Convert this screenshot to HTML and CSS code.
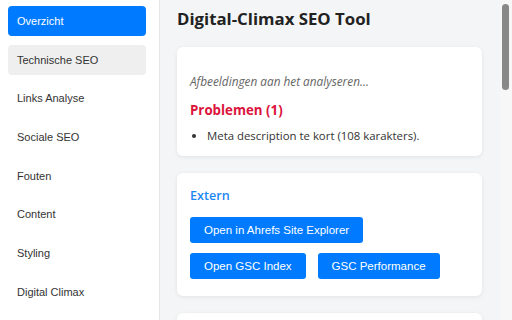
FILE: index.html
```html
<!DOCTYPE html>
<html lang="nl">

<head>
    <meta charset="UTF-8">
    <title>Digital-Climax SEO Tool</title>
    <link rel="stylesheet" href="styles.css">
</head>

<body>
    <!-- zijbalk met tabs -->
    <nav class="sidebar">
        <button class="tab active">Overzicht</button>
        <button class="tab hover">Technische SEO</button>
        <button class="tab">Links Analyse</button>
        <button class="tab">Sociale SEO</button>
        <button class="tab">Fouten</button>
        <button class="tab">Content</button>
        <button class="tab">Styling</button>
        <button class="tab">Digital Climax</button>
    </nav>

    <!-- hoofdinhoud -->
    <main class="main">
        <h1 class="title">Digital-Climax SEO Tool</h1>

        <section class="card">
            <div class="img-results"></div>
            <p class="status">Afbeeldingen aan het analyseren...</p>
            <h3 class="issues-title">Problemen (1)</h3>
            <ul class="issues">
                <li>Meta description te kort (108 karakters).</li>
            </ul>
        </section>

        <section class="card extern">
            <h3 class="section-title">Extern</h3>
            <div class="button-row">
                <button class="ext-button">Open in Ahrefs Site Explorer</button>
                <button class="ext-button">Open GSC Index</button>
                <button class="ext-button">GSC Performance</button>
            </div>
        </section>

        <!-- volgende kaart, valt onder de rand -->
        <section class="card next"></section>
    </main>

    <!-- schuifbalk van het hoofdgedeelte -->
    <div class="scrollbar">
        <div class="scroll-thumb"></div>
    </div>
</body>

</html>
```

FILE: styles.css
```css
/* basis */
* {
    box-sizing: border-box;
    margin: 0;
    padding: 0;
}

body {
    font-family: 'Open Sans', 'Noto Sans', sans-serif;
    background-color: #f4f5f7;
    color: #333;
    display: flex;
    height: 100vh;
    overflow: hidden;
}

/* zijbalk */
.sidebar {
    width: 160px;
    flex-shrink: 0;
    background-color: #fff;
    border-right: 1px solid #e6e6e6;
    padding: 6px 0 0 8px;
    display: flex;
    flex-direction: column;
    gap: 8.7px;
}

.tab {
    width: 138px;
    height: 30px;
    padding: 0 9px;
    text-align: left;
    font-family: 'Liberation Sans', Arial, sans-serif;
    font-size: 11px;
    color: #333;
    background: none;
    border: none;
    border-radius: 4px;
    cursor: pointer;
}

.tab.active {
    background-color: #007bff;
    color: #fff;
}

.tab.hover {
    background-color: #efefef;
}

/* hoofdgedeelte */
.main {
    flex: 1;
    overflow: hidden;
    padding: 8px 18px 0 17px;
}

.title {
    font-size: 16.8px;
    line-height: 22px;
    font-weight: 700;
    color: #222;
    margin-bottom: 17px;
}

.card {
    background-color: #fff;
    border-radius: 6px;
    box-shadow: 0 1px 4px rgba(0, 0, 0, 0.08);
    padding: 13px 13px 11px;
    margin-bottom: 17px;
}

.img-results {
    height: 13px;
}

.status {
    font-size: 11.8px;
    line-height: 16px;
    font-style: italic;
    color: #666;
    margin-bottom: 12px;
}

.issues-title {
    font-size: 13.3px;
    line-height: 19px;
    font-weight: 700;
    color: #dc143c;
    margin-bottom: 7px;
}

.issues {
    padding-left: 17px;
    font-size: 11.4px;
    line-height: 18px;
    color: #333;
}

.section-title {
    font-size: 12.6px;
    line-height: 19px;
    font-weight: 600;
    color: #1c87f2;
    margin-bottom: 12px;
}

/* externe knoppen */
.extern {
    padding-bottom: 17px;
}

.button-row {
    display: flex;
    flex-wrap: wrap;
    gap: 10px 12px;
}

.ext-button {
    height: 26px;
    padding: 0 14px;
    font-family: 'Liberation Sans', Arial, sans-serif;
    font-size: 11.5px;
    color: #fff;
    background-color: #007bff;
    border: none;
    border-radius: 3px;
    cursor: pointer;
}

.next {
    height: 120px;
}

/* schuifbalk */
.scrollbar {
    width: 12px;
    flex-shrink: 0;
    background-color: #f7f7f7;
    padding: 4px 3px 0 2px;
}

.scroll-thumb {
    height: 86px;
    background-color: #888;
    border-radius: 4px;
}
```
